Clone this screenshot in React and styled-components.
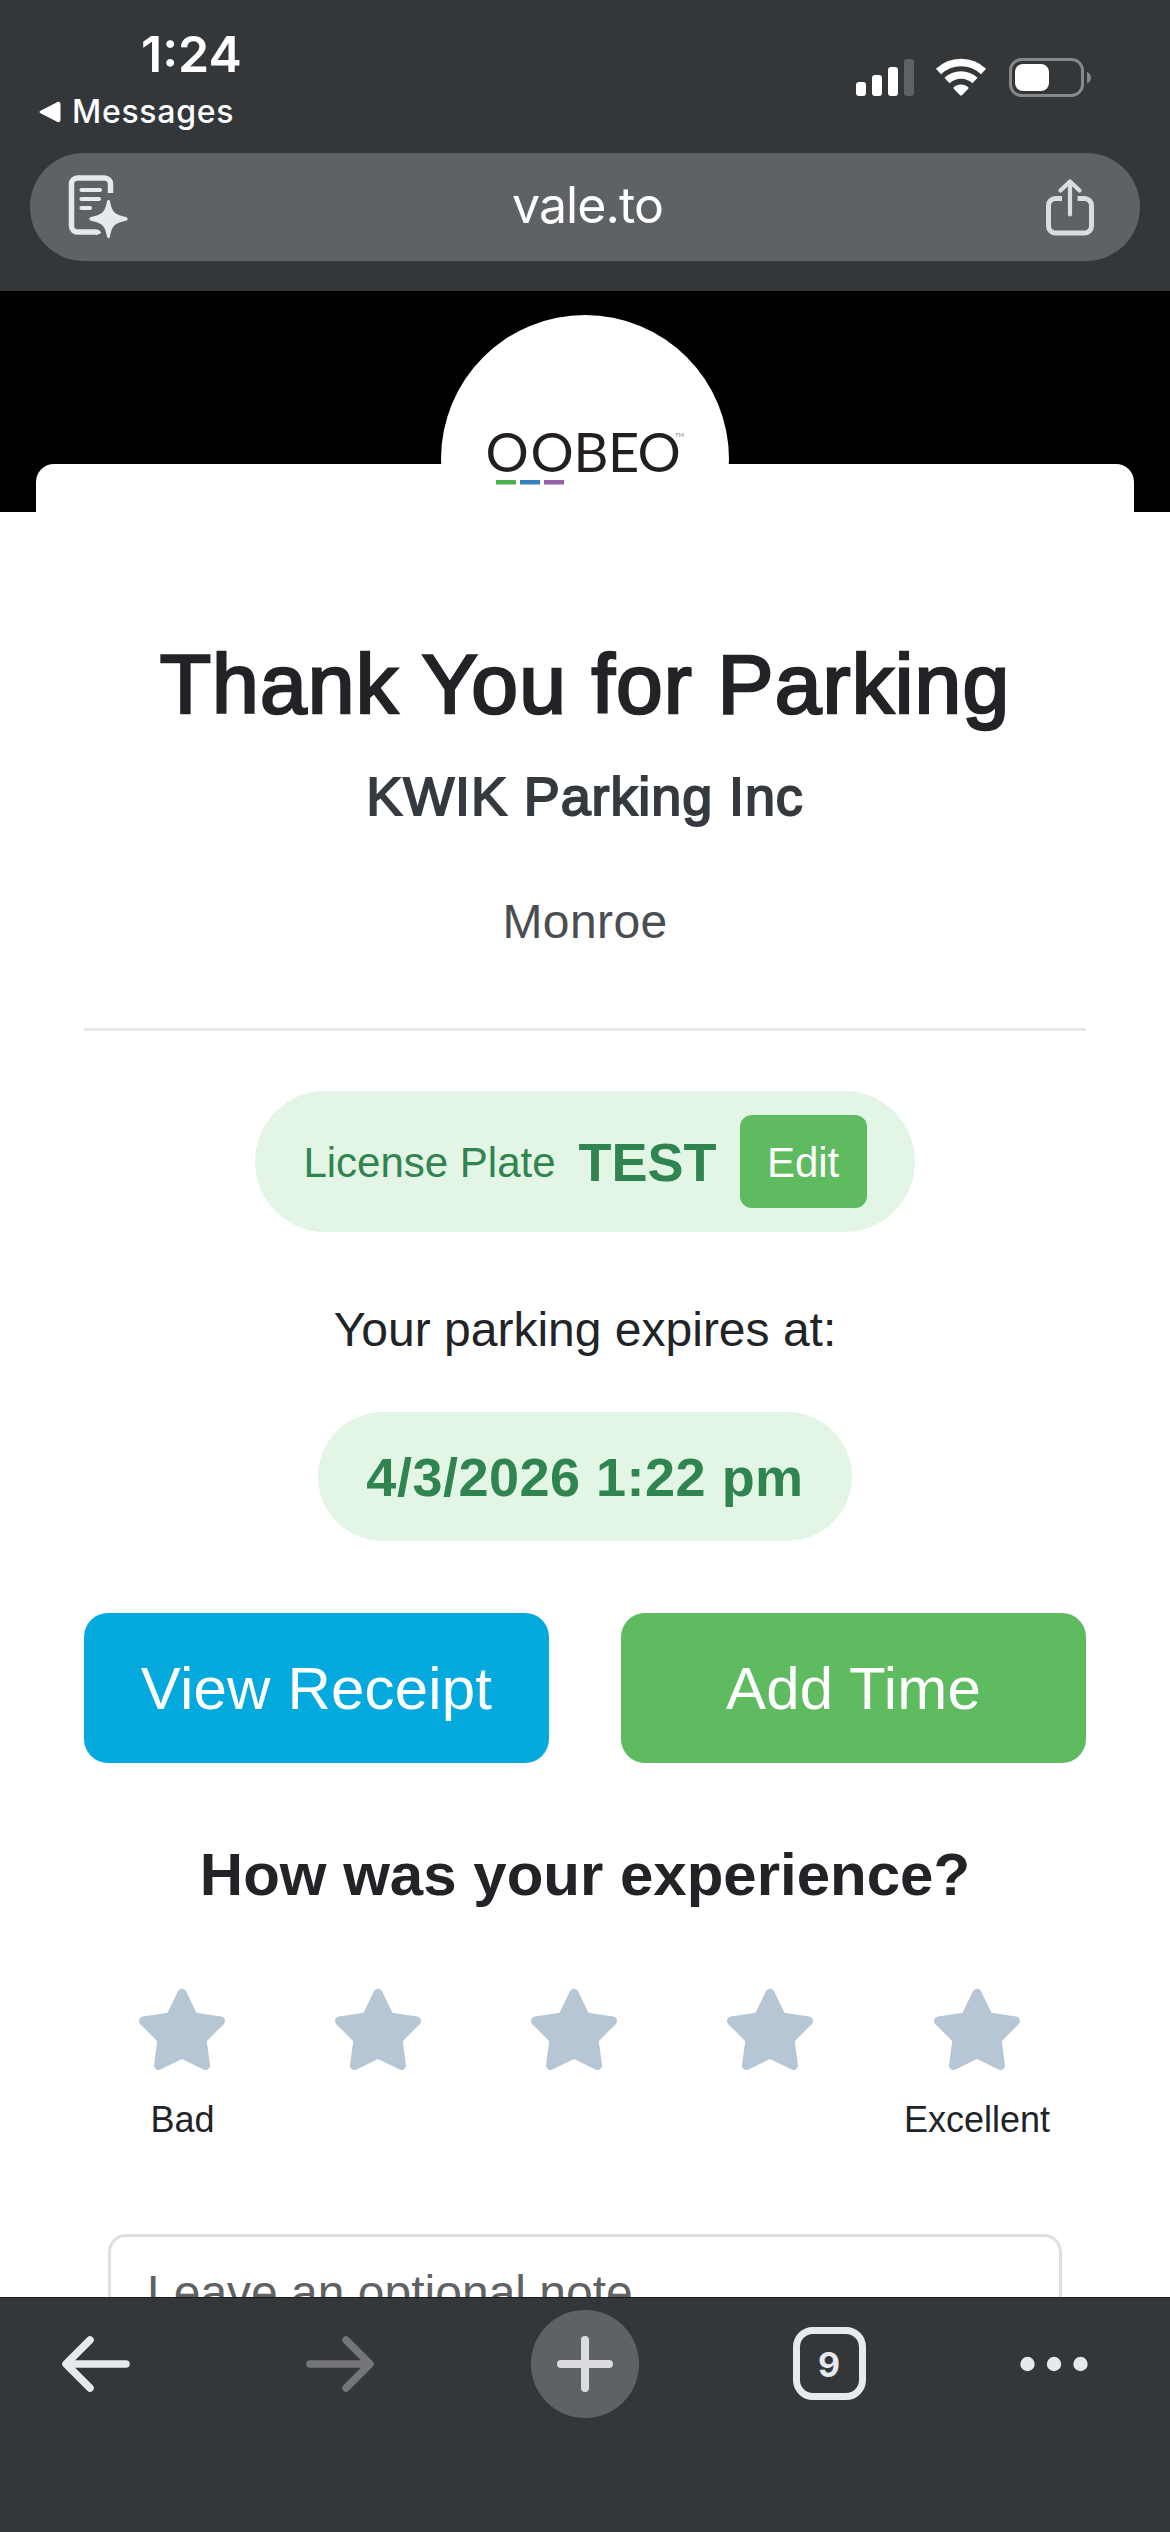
import styled, { createGlobalStyle } from "styled-components";

const ratings = [
  { value: 1, label: "Bad" },
  { value: 2 },
  { value: 3 },
  { value: 4 },
  { value: 5, label: "Excellent" },
];

const StatusIcons = () => (
  <svg width="238" height="44" viewBox="0 0 238 44" fill="none">
    <rect x="1" y="26" width="10" height="14" rx="3" fill="#fff" />
    <rect x="17" y="19" width="10" height="21" rx="3" fill="#fff" />
    <rect x="33" y="11" width="10" height="29" rx="3" fill="#fff" />
    <rect x="49" y="3" width="10" height="37" rx="3" fill="#606265" />
    <path
      d="M83.5 15.5a32.5 32.5 0 0 1 45 0"
      stroke="#fff"
      strokeWidth="7.5"
    />
    <path
      d="M92 24.5a20.5 20.5 0 0 1 28 0"
      stroke="#fff"
      strokeWidth="7.5"
    />
    <path
      d="M106 28.5c-2.8 0-5.2 1-7 2.6-.7.7-.6 1.4 0 2l5.8 5.9c.8.8 1.6.8 2.4 0l5.8-5.9c.6-.6.7-1.3 0-2-1.8-1.600-4.200-2.600-7-2.600z"
      fill="#fff"
    />
    <rect
      x="155.5"
      y="3.5"
      width="72"
      height="36"
      rx="11"
      stroke="#86888a"
      strokeWidth="3"
    />
    <rect x="160" y="8" width="34" height="27" rx="8" fill="#fff" />
    <path d="M232 16c2.5 1 4 3 4 5.7s-1.5 4.7-4 5.7z" fill="#86888a" />
  </svg>
);

const ReaderIcon = () => (
  <svg width="62" height="66" viewBox="0 0 62 66" fill="none">
    <path
      d="M42.5 19V10a6 6 0 0 0-6-6H9.5a6 6 0 0 0-6 6v42a6 6 0 0 0 6 6H28a4 4 0 0 1 3 2"
      stroke="#e6e9ed"
      strokeWidth="5.5"
    />
    <path
      d="M13.5 16h18.5M13.5 25h17.5M13.5 34h8.5"
      stroke="#e6e9ed"
      strokeWidth="4.2"
      strokeLinecap="round"
    />
    <path
      d="M40.5 26c1.2 0 1.4.8 1.6 1.8 2 10.2 4.2 12.6 15.8 15.2 2.3.6 2.3 3.2 0 3.7-11.6 2.6-13.8 5-15.8 15.5-.5 2.6-2.7 2.6-3.2 0-2-10.5-4.2-12.9-15.8-15.5-2.3-.5-2.3-3.1 0-3.7 11.6-2.6 13.8-5 15.8-15.2.2-1 .4-1.8 1.6-1.8z"
      fill="#e6e9ed"
    />
  </svg>
);

const ShareIcon = () => (
  <svg width="50" height="60" viewBox="0 0 50 60" fill="none">
    <path
      d="M17 21.5h-6.5a7 7 0 0 0-7 7V49a7 7 0 0 0 7 7h29a7 7 0 0 0 7-7V28.5a7 7 0 0 0-7-7H32.5"
      stroke="#dadce1"
      strokeWidth="5"
    />
    <path
      d="M25 37.5V5M15.5 13.500 25 4.500l9.500 9"
      stroke="#dadce1"
      strokeWidth="4.2"
      strokeLinecap="round"
      strokeLinejoin="round"
    />
  </svg>
);

const Logo = () => (
  <svg width="220" height="76" viewBox="-10 -10 220 76">
    <text
      x="0.5 45.5 88.500 123 152.500"
      y="41"
      fill="#231f20"
      fontFamily="Lato, sans-serif"
      fontSize="54"
    >
      OOBEO
    </text>
    <text
      x="190"
      y="5.5"
      fill="#8a8a8a"
      fontFamily="Lato, sans-serif"
      fontSize="6"
    >
      TM
    </text>
    <rect x="11" y="49" width="20" height="4.5" fill="#4caf50" />
    <rect x="35" y="49" width="20" height="4.5" fill="#3182bd" />
    <rect x="59" y="49" width="20" height="4.5" fill="#9561a9" />
  </svg>
);

const Star = () => (
  <svg width="88" height="90" viewBox="0 0 88 90">
    <path
      d="M44 8.200 55.500 32 82.500 36 64 54.500 67.500 80.500 44 69 20.500 80.500 24 54.500 5.500 36 32.500 32Z"
      fill="#b6c6d5"
      stroke="#b6c6d5"
      strokeWidth="9"
      strokeLinejoin="round"
    />
  </svg>
);

const ArrowIcon = ({ flip, color }) => (
  <svg
    width="68"
    height="56"
    viewBox="0 0 68 56"
    fill="none"
    transform={flip ? "scale(-1 1)" : undefined}
  >
    <path
      d="M64 28H6M28 4 4 28l24 24"
      stroke={color}
      strokeWidth="7.5"
      strokeLinecap="round"
      strokeLinejoin="round"
    />
  </svg>
);

const App = () => {
  return (
    <>
      <GlobalStyle />
      <Screen>
        <Header>
          <StatusBar>
            <div>
              <Time>1:24</Time>
              <BackLink>
                <svg width="22" height="22" viewBox="0 0 22 22">
                  <path
                    d="M2 9.5 18 1.2c2-1 3.5 0 3.5 2v15.6c0 2-1.5 3-3.5 2L2 12.5c-2-1-2-2 0-3z"
                    fill="#fff"
                  />
                </svg>
                Messages
              </BackLink>
            </div>
            <StatusIcons />
          </StatusBar>
          <AddressBar>
            <ReaderIcon />
            <Address>vale.to</Address>
            <ShareIcon />
          </AddressBar>
        </Header>

        <Page>
          <Banner>
            <LogoCircle>
              <Logo />
            </LogoCircle>
          </Banner>
          <Content>
            <Title>Thank You for Parking</Title>
            <Company>KWIK Parking Inc</Company>
            <Location>Monroe</Location>
            <Divider />
            <PlatePill>
              <span>License Plate</span>
              <strong>TEST</strong>
              <EditButton>Edit</EditButton>
            </PlatePill>
            <ExpiresText>Your parking expires at:</ExpiresText>
            <DatePill>4/3/2026 1:22 pm</DatePill>
            <Actions>
              <ActionButton $color="#04a9dd">View Receipt</ActionButton>
              <ActionButton $color="#5fbb60">Add Time</ActionButton>
            </Actions>
            <Question>How was your experience?</Question>
            <Ratings>
              {ratings.map(({ value, label }) => (
                <Rating key={value}>
                  <Star />
                  {label}
                </Rating>
              ))}
            </Ratings>
            <Note>Leave an optional note</Note>
          </Content>
        </Page>

        <Toolbar>
          <Tool>
            <ArrowIcon color="#e6e9ed" />
          </Tool>
          <Tool>
            <ArrowIcon flip color="#737578" />
          </Tool>
          <Tool $filled>
            <svg width="56" height="56" viewBox="0 0 56 56">
              <path
                d="M28 4v48M4 28h48"
                stroke="#dadce1"
                strokeWidth="8"
                strokeLinecap="round"
              />
            </svg>
          </Tool>
          <Tool>
            <TabCount>9</TabCount>
          </Tool>
          <svg width="68" height="16" viewBox="0 0 68 16" fill="#e6e9ed">
            <circle cx="7.5" cy="8" r="7.2" />
            <circle cx="34" cy="8" r="7.2" />
            <circle cx="60.5" cy="8" r="7.2" />
          </svg>
        </Toolbar>
      </Screen>
    </>
  );
};

export default App;

const GlobalStyle = createGlobalStyle`
  * {
    box-sizing: border-box;
  }
  body {
    margin: 0;
    background: #fff;
    color: #212327;
    font-family: "Liberation Sans", Arial, sans-serif;
  }
  svg {
    display: block;
    flex-shrink: 0;
  }
  button {
    border: none;
    padding: 0;
    font-family: inherit;
  }
`;

const Screen = styled.div`
  width: 1170px;
  height: 2532px;
  display: flex;
  flex-direction: column;
  overflow: hidden;
`;

const Header = styled.header`
  height: 291px;
  flex-shrink: 0;
  background: #34373a;
  color: #fff;
  font-family: Inter, sans-serif;
`;

const StatusBar = styled.div`
  height: 153px;
  padding: 24px 77px 0 39px;
  display: flex;
  justify-content: space-between;

  > svg {
    margin-top: 32px;
  }
`;

const Time = styled.div`
  padding-left: 102px;
  font-size: 50px;
  font-weight: 600;
  line-height: 60px;
`;

const BackLink = styled.div`
  margin-top: 8px;
  display: flex;
  align-items: center;
  gap: 11px;
  font-size: 32px;
  font-weight: 500;
  line-height: 40px;
  letter-spacing: 0.7px;
`;

const AddressBar = styled.div`
  height: 108px;
  margin: 0 30px;
  padding: 0 45px 0 38px;
  border-radius: 54px;
  background: #5f6265;
  display: flex;
  align-items: center;
  justify-content: space-between;
`;

const Address = styled.span`
  padding-bottom: 4px;
  font-size: 50px;
  line-height: 60px;
  letter-spacing: -0.9px;
`;

const Page = styled.main`
  flex: 1;
  min-height: 0;
  overflow: hidden;
`;

const Banner = styled.div`
  position: relative;
  height: 221px;
  padding-top: 24px;
  background: #000;

  &::before {
    content: "";
    position: absolute;
    left: 36px;
    right: 36px;
    bottom: 0;
    height: 48px;
    border-radius: 18px 18px 0 0;
    background: #fff;
  }
`;

const LogoCircle = styled.div`
  position: relative;
  width: 288px;
  height: 288px;
  margin: 0 auto;
  border-radius: 50%;
  background: #fff;
  display: flex;
  align-items: center;
  justify-content: center;
`;

const Content = styled.div`
  padding: 122px 84px 0;
  display: flex;
  flex-direction: column;
  align-items: center;
`;

const Title = styled.h1`
  margin: 0;
  font-size: 84px;
  font-weight: 400;
  line-height: 100px;
  letter-spacing: 1.15px;
  -webkit-text-stroke: 2.6px currentColor;
`;

const Company = styled.h2`
  margin: 30px 0 0;
  color: #343a3f;
  font-size: 54px;
  font-weight: 400;
  line-height: 64px;
  letter-spacing: 0.9px;
  -webkit-text-stroke: 1.9px currentColor;
`;

const Location = styled.p`
  margin: 58px 0 0;
  color: #4a4e52;
  font-size: 48px;
  line-height: 72px;
  letter-spacing: 0.4px;
`;

const Divider = styled.hr`
  width: 100%;
  height: 3px;
  margin: 70px 0 0;
  border: none;
  background: #e5e7e8;
`;

const Pill = styled.div`
  border-radius: 71px;
  background: #e3f5e4;
  color: #2f8450;
  display: flex;
  align-items: center;
`;

const PlatePill = styled(Pill)`
  height: 141px;
  margin-top: 60px;
  padding: 0 48px;
  gap: 23px;
  font-size: 42px;

  span {
    padding-top: 2px;
  }
  strong {
    font-size: 54px;
  }
`;

const EditButton = styled.button`
  width: 127px;
  height: 93px;
  padding-top: 2px;
  border-radius: 12px;
  background: #5fbb60;
  color: #fff;
  font-size: 42px;
`;

const ExpiresText = styled.p`
  margin: 62px 0 0;
  font-size: 48px;
  line-height: 72px;
`;

const DatePill = styled(Pill)`
  height: 129px;
  margin-top: 46px;
  padding: 0 48px;
  font-size: 54px;
  font-weight: 700;
  letter-spacing: 0.5px;
`;

const Actions = styled.div`
  width: 100%;
  margin-top: 72px;
  display: flex;
  gap: 72px;
`;

const ActionButton = styled.button`
  flex: 1;
  height: 150px;
  border-radius: 24px;
  background: ${({ $color }) => $color};
  color: #fff;
  font-size: 60px;
  letter-spacing: 0.2px;
`;

const Question = styled.h3`
  margin: 76px 0 0;
  font-size: 60px;
  font-weight: 700;
  line-height: 72px;
`;

const Ratings = styled.div`
  margin-top: 74px;
  display: flex;
  gap: 71px;
`;

const Rating = styled.div`
  min-width: 125px;
  height: 161px;
  display: flex;
  flex-direction: column;
  align-items: center;
  gap: 18px;
  font-size: 36px;
  line-height: 54px;
`;

const Note = styled.div`
  width: 954px;
  height: 200px;
  margin-top: 88px;
  padding: 20px 36px;
  border: 3px solid #dee0e2;
  border-radius: 18px;
  color: #5f6163;
  font-size: 48px;
  line-height: 72px;
`;

const Toolbar = styled.footer`
  height: 235px;
  flex-shrink: 0;
  padding: 11px 0 114px 41.5px;
  border-top: 1px solid #1b1d1f;
  background: #34373a;
  display: flex;
  align-items: center;
  gap: 136.5px;
`;

const Tool = styled.div`
  width: 108px;
  height: 108px;
  flex-shrink: 0;
  border-radius: 50%;
  background: ${({ $filled }) => ($filled ? "#5f6265" : "none")};
  display: flex;
  align-items: center;
  justify-content: center;
`;

const TabCount = styled.span`
  width: 73px;
  height: 73px;
  border: 7px solid #e6e9ed;
  border-radius: 20px;
  color: #e6e9ed;
  font-family: Inter, sans-serif;
  font-size: 34px;
  font-weight: 700;
  line-height: 61px;
  text-align: center;
`;
